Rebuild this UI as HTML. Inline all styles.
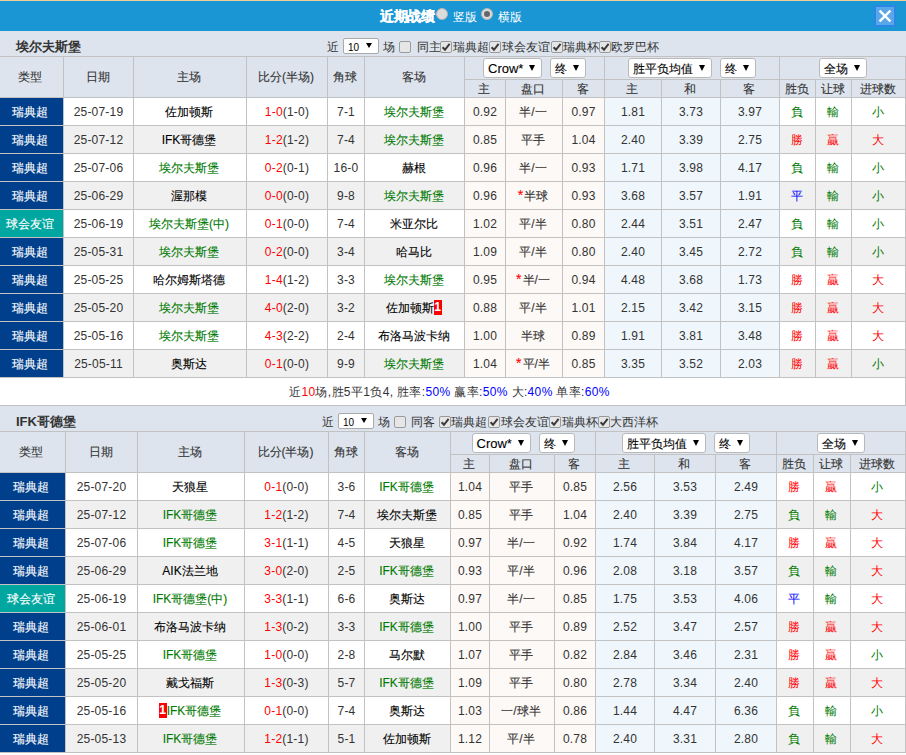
<!DOCTYPE html><html><head><meta charset="utf-8"><style>
html,body{margin:0;padding:0;background:#fff;}
body{width:906px;height:755px;position:relative;overflow:hidden;font-family:"Liberation Sans",sans-serif;font-size:12px;color:#333;}
div{position:absolute;box-sizing:border-box;}
.c,.h,.grp{display:flex;align-items:center;justify-content:center;white-space:nowrap;}
.c{padding-top:1px;}
.h{padding-top:1px;}
.nm{font-weight:bold;font-size:13px;color:#333;line-height:25px;padding-top:3px;}
.sel{display:inline-block;position:relative;height:20px;box-sizing:border-box;border:1px solid #b9b9b9;border-radius:3px;background:#fff;vertical-align:top;}
.st{position:absolute;left:4px;top:1px;line-height:18px;font-size:12px;color:#000;}
.st.lat{font-size:13px;top:1px;}
.tri{position:absolute;right:6px;top:6px;width:0;height:0;border-left:3px solid transparent;border-right:3px solid transparent;border-top:6px solid #000;}
.gap{display:inline-block;width:8px;}
.bdg{display:inline-block;background:#f00;color:#fff;font-weight:bold;width:8px;height:15px;line-height:15px;text-align:center;font-size:12px;position:relative;top:-1px;vertical-align:middle;}
.cb{display:inline-block;width:11px;height:11px;box-sizing:border-box;border:1px solid #9a9a9a;border-radius:2px;background:#e6e6e6;position:relative;vertical-align:middle;}
.star{color:#f00;font-size:14px;margin-right:1px;line-height:12px;}
.in{white-space:pre;position:relative;left:-1px;}
.in.lat0{left:0;letter-spacing:0.2px;}
.in.cjk{-webkit-text-stroke:0.1px currentColor;}
.ns .in.cjk{-webkit-text-stroke:0;}
.c0 .in{left:-2px;}
.grp .in{left:0;}
.ct{line-height:25px;padding-top:4px;white-space:nowrap;color:#333;}
.ct .cb{position:absolute;left:0;top:10px;width:12px;height:12px;}
.sm{position:absolute;left:0;top:7px;width:36px;height:16px;box-sizing:border-box;border:1px solid #aaa;border-radius:2px;background:#fff;}
.smt{position:absolute;left:4px;top:2px;line-height:14px;font-size:10px;color:#000;}
.tri2{position:absolute;left:22px;top:4px;width:0;height:0;border-left:3px solid transparent;border-right:3px solid transparent;border-top:5px solid #000;}
.cb svg{position:absolute;left:0;top:0;}
.tt{color:#fff;font-weight:bold;font-size:14px;line-height:30px;white-space:nowrap;letter-spacing:-0.5px;-webkit-text-stroke:0.3px #fff;}
.tt2{color:#fff;font-size:12px;line-height:32px;white-space:nowrap;}
.rd{border-radius:50%;background:#dcdcdc;border:1px solid #b5b5b5;}
.dot{left:2px;top:2px;width:6px;height:6px;border-radius:50%;background:#666;}
</style></head><body>

<div style="left:0px;top:0px;width:906px;height:1px;background:#f1cf95"></div>
<div style="left:0px;top:1px;width:906px;height:30px;background:#1a96d5"></div>
<div class="tt" style="left:380px;top:1px;width:60px;height:30px;">近期战绩</div>
<div class="rd" style="left:436px;top:8px;width:12px;height:12px;"></div>
<div class="tt2" style="left:453px;top:1px;width:30px;height:30px;">竖版</div>
<div class="rd" style="left:481px;top:8px;width:12px;height:12px;"><div class="dot"></div></div>
<div class="tt2" style="left:498px;top:1px;width:30px;height:30px;">横版</div>
<div style="left:874px;top:5px;width:22px;height:22px;background:#2b88e2"></div>
<div style="left:876px;top:7px;width:18px;height:18px;background:#5aa6ea"><svg width="18" height="18" viewBox="0 0 18 18" style="position:absolute;left:0;top:0"><path d="M3.6 3.6 L14.4 14.4 M14.4 3.6 L3.6 14.4" stroke="#fff" stroke-width="2.4" stroke-linecap="butt"/></svg></div>
<div style="left:0px;top:31px;width:906px;height:25px;background:#dde4ed"></div>
<div class="nm" style="left:16px;top:31px;width:200px;height:25px;">埃尔夫斯堡</div>
<div style="left:0px;top:56px;width:906px;height:41px;background:#dde4ed"></div>
<div class="h c0" style="left:0px;top:57px;width:63px;height:40px;"><span class="in cjk">类型</span></div>
<div class="h" style="left:64px;top:57px;width:69px;height:40px;"><span class="in cjk">日期</span></div>
<div class="h" style="left:134px;top:57px;width:112px;height:40px;"><span class="in cjk">主场</span></div>
<div class="h" style="left:247px;top:57px;width:80px;height:40px;"><span class="in cjk">比分(半场)</span></div>
<div class="h" style="left:328px;top:57px;width:36px;height:40px;"><span class="in cjk">角球</span></div>
<div class="h" style="left:365px;top:57px;width:99px;height:40px;"><span class="in cjk">客场</span></div>
<div class="h" style="left:465px;top:80px;width:40px;height:17px;"><span class="in cjk">主</span></div>
<div class="h" style="left:506px;top:80px;width:56px;height:17px;"><span class="in cjk">盘口</span></div>
<div class="h" style="left:563px;top:80px;width:41px;height:17px;"><span class="in cjk">客</span></div>
<div class="h" style="left:605px;top:80px;width:56px;height:17px;"><span class="in cjk">主</span></div>
<div class="h" style="left:662px;top:80px;width:58px;height:17px;"><span class="in cjk">和</span></div>
<div class="h" style="left:721px;top:80px;width:58px;height:17px;"><span class="in cjk">客</span></div>
<div class="h" style="left:780px;top:80px;width:35px;height:17px;"><span class="in cjk">胜负</span></div>
<div class="h" style="left:816px;top:80px;width:35px;height:17px;"><span class="in cjk">让球</span></div>
<div class="h" style="left:852px;top:80px;width:53px;height:17px;"><span class="in cjk">进球数</span></div>
<div class="grp" style="left:465px;top:57px;width:139px;height:22px;"><span class="in cjk"><span class="sel" style="width:59px"><span class="st lat">Crow*</span><span class="tri"></span></span><span class="gap"></span><span class="sel" style="width:36px"><span class="st">终</span><span class="tri"></span></span></span></div>
<div class="grp" style="left:605px;top:57px;width:174px;height:22px;"><span class="in cjk"><span class="sel" style="width:84px"><span class="st">胜平负均值</span><span class="tri"></span></span><span class="gap"></span><span class="sel" style="width:36px"><span class="st">终</span><span class="tri"></span></span></span></div>
<div class="grp" style="left:780px;top:57px;width:125px;height:22px;"><span class="in cjk"><span class="sel" style="width:48px"><span class="st">全场</span><span class="tri"></span></span></span></div>
<div style="left:0px;top:98px;width:906px;height:27px;background:#fff"></div>
<div class="c c0" style="left:0px;top:98px;width:63px;height:27px;background:#003f8c;color:#fff"><span class="in cjk">瑞典超</span></div>
<div class="c" style="left:64px;top:98px;width:69px;height:27px;"><span class="in lat0">25-07-19</span></div>
<div class="c" style="left:134px;top:98px;width:112px;height:27px;"><span class="in cjk"><span style="color:#000">佐加顿斯</span></span></div>
<div class="c" style="left:247px;top:98px;width:80px;height:27px;"><span class="in lat0"><span style="color:#ff0000">1-0</span>(1-0)</span></div>
<div class="c" style="left:328px;top:98px;width:36px;height:27px;"><span class="in lat0">7-1</span></div>
<div class="c" style="left:365px;top:98px;width:99px;height:27px;"><span class="in cjk"><span style="color:#007a00">埃尔夫斯堡</span></span></div>
<div class="c" style="left:465px;top:98px;width:40px;height:27px;background:#fdf9f6"><span class="in lat0">0.92</span></div>
<div class="c" style="left:506px;top:98px;width:56px;height:27px;background:#fdf9f6"><span class="in cjk">半/一</span></div>
<div class="c" style="left:563px;top:98px;width:41px;height:27px;background:#fdf9f6"><span class="in lat0">0.97</span></div>
<div class="c" style="left:605px;top:98px;width:56px;height:27px;background:#eff7fc"><span class="in lat0">1.81</span></div>
<div class="c" style="left:662px;top:98px;width:58px;height:27px;background:#eff7fc"><span class="in lat0">3.73</span></div>
<div class="c" style="left:721px;top:98px;width:58px;height:27px;background:#eff7fc"><span class="in lat0">3.97</span></div>
<div class="c ns" style="left:780px;top:98px;width:35px;height:27px;color:#007a00"><span class="in cjk">負</span></div>
<div class="c ns" style="left:816px;top:98px;width:35px;height:27px;color:#007a00"><span class="in cjk">輸</span></div>
<div class="c ns" style="left:852px;top:98px;width:53px;height:27px;color:#007a00"><span class="in cjk">小</span></div>
<div style="left:0px;top:126px;width:906px;height:27px;background:#f0f0f0"></div>
<div class="c c0" style="left:0px;top:126px;width:63px;height:27px;background:#003f8c;color:#fff"><span class="in cjk">瑞典超</span></div>
<div class="c" style="left:64px;top:126px;width:69px;height:27px;"><span class="in lat0">25-07-12</span></div>
<div class="c" style="left:134px;top:126px;width:112px;height:27px;"><span class="in cjk"><span style="color:#000">IFK哥德堡</span></span></div>
<div class="c" style="left:247px;top:126px;width:80px;height:27px;"><span class="in lat0"><span style="color:#ff0000">1-2</span>(1-2)</span></div>
<div class="c" style="left:328px;top:126px;width:36px;height:27px;"><span class="in lat0">7-4</span></div>
<div class="c" style="left:365px;top:126px;width:99px;height:27px;"><span class="in cjk"><span style="color:#007a00">埃尔夫斯堡</span></span></div>
<div class="c" style="left:465px;top:126px;width:40px;height:27px;background:#fdf9f6"><span class="in lat0">0.85</span></div>
<div class="c" style="left:506px;top:126px;width:56px;height:27px;background:#fdf9f6"><span class="in cjk">平手</span></div>
<div class="c" style="left:563px;top:126px;width:41px;height:27px;background:#fdf9f6"><span class="in lat0">1.04</span></div>
<div class="c" style="left:605px;top:126px;width:56px;height:27px;background:#eff7fc"><span class="in lat0">2.40</span></div>
<div class="c" style="left:662px;top:126px;width:58px;height:27px;background:#eff7fc"><span class="in lat0">3.39</span></div>
<div class="c" style="left:721px;top:126px;width:58px;height:27px;background:#eff7fc"><span class="in lat0">2.75</span></div>
<div class="c ns" style="left:780px;top:126px;width:35px;height:27px;color:#ff0000"><span class="in cjk">勝</span></div>
<div class="c ns" style="left:816px;top:126px;width:35px;height:27px;color:#ff0000"><span class="in cjk">贏</span></div>
<div class="c ns" style="left:852px;top:126px;width:53px;height:27px;color:#ff0000"><span class="in cjk">大</span></div>
<div style="left:0px;top:154px;width:906px;height:27px;background:#fff"></div>
<div class="c c0" style="left:0px;top:154px;width:63px;height:27px;background:#003f8c;color:#fff"><span class="in cjk">瑞典超</span></div>
<div class="c" style="left:64px;top:154px;width:69px;height:27px;"><span class="in lat0">25-07-06</span></div>
<div class="c" style="left:134px;top:154px;width:112px;height:27px;"><span class="in cjk"><span style="color:#007a00">埃尔夫斯堡</span></span></div>
<div class="c" style="left:247px;top:154px;width:80px;height:27px;"><span class="in lat0"><span style="color:#ff0000">0-2</span>(0-1)</span></div>
<div class="c" style="left:328px;top:154px;width:36px;height:27px;"><span class="in lat0">16-0</span></div>
<div class="c" style="left:365px;top:154px;width:99px;height:27px;"><span class="in cjk"><span style="color:#000">赫根</span></span></div>
<div class="c" style="left:465px;top:154px;width:40px;height:27px;background:#fdf9f6"><span class="in lat0">0.96</span></div>
<div class="c" style="left:506px;top:154px;width:56px;height:27px;background:#fdf9f6"><span class="in cjk">半/一</span></div>
<div class="c" style="left:563px;top:154px;width:41px;height:27px;background:#fdf9f6"><span class="in lat0">0.93</span></div>
<div class="c" style="left:605px;top:154px;width:56px;height:27px;background:#eff7fc"><span class="in lat0">1.71</span></div>
<div class="c" style="left:662px;top:154px;width:58px;height:27px;background:#eff7fc"><span class="in lat0">3.98</span></div>
<div class="c" style="left:721px;top:154px;width:58px;height:27px;background:#eff7fc"><span class="in lat0">4.17</span></div>
<div class="c ns" style="left:780px;top:154px;width:35px;height:27px;color:#007a00"><span class="in cjk">負</span></div>
<div class="c ns" style="left:816px;top:154px;width:35px;height:27px;color:#007a00"><span class="in cjk">輸</span></div>
<div class="c ns" style="left:852px;top:154px;width:53px;height:27px;color:#007a00"><span class="in cjk">小</span></div>
<div style="left:0px;top:182px;width:906px;height:27px;background:#f0f0f0"></div>
<div class="c c0" style="left:0px;top:182px;width:63px;height:27px;background:#003f8c;color:#fff"><span class="in cjk">瑞典超</span></div>
<div class="c" style="left:64px;top:182px;width:69px;height:27px;"><span class="in lat0">25-06-29</span></div>
<div class="c" style="left:134px;top:182px;width:112px;height:27px;"><span class="in cjk"><span style="color:#000">渥那模</span></span></div>
<div class="c" style="left:247px;top:182px;width:80px;height:27px;"><span class="in lat0"><span style="color:#ff0000">0-0</span>(0-0)</span></div>
<div class="c" style="left:328px;top:182px;width:36px;height:27px;"><span class="in lat0">9-8</span></div>
<div class="c" style="left:365px;top:182px;width:99px;height:27px;"><span class="in cjk"><span style="color:#007a00">埃尔夫斯堡</span></span></div>
<div class="c" style="left:465px;top:182px;width:40px;height:27px;background:#fdf9f6"><span class="in lat0">0.96</span></div>
<div class="c" style="left:506px;top:182px;width:56px;height:27px;background:#fdf9f6"><span class="in cjk"><span class="star">*</span>半球</span></div>
<div class="c" style="left:563px;top:182px;width:41px;height:27px;background:#fdf9f6"><span class="in lat0">0.93</span></div>
<div class="c" style="left:605px;top:182px;width:56px;height:27px;background:#eff7fc"><span class="in lat0">3.68</span></div>
<div class="c" style="left:662px;top:182px;width:58px;height:27px;background:#eff7fc"><span class="in lat0">3.57</span></div>
<div class="c" style="left:721px;top:182px;width:58px;height:27px;background:#eff7fc"><span class="in lat0">1.91</span></div>
<div class="c ns" style="left:780px;top:182px;width:35px;height:27px;color:#0000ff"><span class="in cjk">平</span></div>
<div class="c ns" style="left:816px;top:182px;width:35px;height:27px;color:#007a00"><span class="in cjk">輸</span></div>
<div class="c ns" style="left:852px;top:182px;width:53px;height:27px;color:#007a00"><span class="in cjk">小</span></div>
<div style="left:0px;top:210px;width:906px;height:27px;background:#fff"></div>
<div class="c c0" style="left:0px;top:210px;width:63px;height:27px;background:#00a6a0;color:#fff"><span class="in cjk">球会友谊</span></div>
<div class="c" style="left:64px;top:210px;width:69px;height:27px;"><span class="in lat0">25-06-19</span></div>
<div class="c" style="left:134px;top:210px;width:112px;height:27px;"><span class="in cjk"><span style="color:#007a00">埃尔夫斯堡(中)</span></span></div>
<div class="c" style="left:247px;top:210px;width:80px;height:27px;"><span class="in lat0"><span style="color:#ff0000">0-1</span>(0-0)</span></div>
<div class="c" style="left:328px;top:210px;width:36px;height:27px;"><span class="in lat0">7-4</span></div>
<div class="c" style="left:365px;top:210px;width:99px;height:27px;"><span class="in cjk"><span style="color:#000">米亚尔比</span></span></div>
<div class="c" style="left:465px;top:210px;width:40px;height:27px;background:#fdf9f6"><span class="in lat0">1.02</span></div>
<div class="c" style="left:506px;top:210px;width:56px;height:27px;background:#fdf9f6"><span class="in cjk">平/半</span></div>
<div class="c" style="left:563px;top:210px;width:41px;height:27px;background:#fdf9f6"><span class="in lat0">0.80</span></div>
<div class="c" style="left:605px;top:210px;width:56px;height:27px;background:#eff7fc"><span class="in lat0">2.44</span></div>
<div class="c" style="left:662px;top:210px;width:58px;height:27px;background:#eff7fc"><span class="in lat0">3.51</span></div>
<div class="c" style="left:721px;top:210px;width:58px;height:27px;background:#eff7fc"><span class="in lat0">2.47</span></div>
<div class="c ns" style="left:780px;top:210px;width:35px;height:27px;color:#007a00"><span class="in cjk">負</span></div>
<div class="c ns" style="left:816px;top:210px;width:35px;height:27px;color:#007a00"><span class="in cjk">輸</span></div>
<div class="c ns" style="left:852px;top:210px;width:53px;height:27px;color:#007a00"><span class="in cjk">小</span></div>
<div style="left:0px;top:238px;width:906px;height:27px;background:#f0f0f0"></div>
<div class="c c0" style="left:0px;top:238px;width:63px;height:27px;background:#003f8c;color:#fff"><span class="in cjk">瑞典超</span></div>
<div class="c" style="left:64px;top:238px;width:69px;height:27px;"><span class="in lat0">25-05-31</span></div>
<div class="c" style="left:134px;top:238px;width:112px;height:27px;"><span class="in cjk"><span style="color:#007a00">埃尔夫斯堡</span></span></div>
<div class="c" style="left:247px;top:238px;width:80px;height:27px;"><span class="in lat0"><span style="color:#ff0000">0-2</span>(0-0)</span></div>
<div class="c" style="left:328px;top:238px;width:36px;height:27px;"><span class="in lat0">3-4</span></div>
<div class="c" style="left:365px;top:238px;width:99px;height:27px;"><span class="in cjk"><span style="color:#000">哈马比</span></span></div>
<div class="c" style="left:465px;top:238px;width:40px;height:27px;background:#fdf9f6"><span class="in lat0">1.09</span></div>
<div class="c" style="left:506px;top:238px;width:56px;height:27px;background:#fdf9f6"><span class="in cjk">平/半</span></div>
<div class="c" style="left:563px;top:238px;width:41px;height:27px;background:#fdf9f6"><span class="in lat0">0.80</span></div>
<div class="c" style="left:605px;top:238px;width:56px;height:27px;background:#eff7fc"><span class="in lat0">2.40</span></div>
<div class="c" style="left:662px;top:238px;width:58px;height:27px;background:#eff7fc"><span class="in lat0">3.45</span></div>
<div class="c" style="left:721px;top:238px;width:58px;height:27px;background:#eff7fc"><span class="in lat0">2.72</span></div>
<div class="c ns" style="left:780px;top:238px;width:35px;height:27px;color:#007a00"><span class="in cjk">負</span></div>
<div class="c ns" style="left:816px;top:238px;width:35px;height:27px;color:#007a00"><span class="in cjk">輸</span></div>
<div class="c ns" style="left:852px;top:238px;width:53px;height:27px;color:#007a00"><span class="in cjk">小</span></div>
<div style="left:0px;top:266px;width:906px;height:27px;background:#fff"></div>
<div class="c c0" style="left:0px;top:266px;width:63px;height:27px;background:#003f8c;color:#fff"><span class="in cjk">瑞典超</span></div>
<div class="c" style="left:64px;top:266px;width:69px;height:27px;"><span class="in lat0">25-05-25</span></div>
<div class="c" style="left:134px;top:266px;width:112px;height:27px;"><span class="in cjk"><span style="color:#000">哈尔姆斯塔德</span></span></div>
<div class="c" style="left:247px;top:266px;width:80px;height:27px;"><span class="in lat0"><span style="color:#ff0000">1-4</span>(1-2)</span></div>
<div class="c" style="left:328px;top:266px;width:36px;height:27px;"><span class="in lat0">3-3</span></div>
<div class="c" style="left:365px;top:266px;width:99px;height:27px;"><span class="in cjk"><span style="color:#007a00">埃尔夫斯堡</span></span></div>
<div class="c" style="left:465px;top:266px;width:40px;height:27px;background:#fdf9f6"><span class="in lat0">0.95</span></div>
<div class="c" style="left:506px;top:266px;width:56px;height:27px;background:#fdf9f6"><span class="in cjk"><span class="star">*</span>半/一</span></div>
<div class="c" style="left:563px;top:266px;width:41px;height:27px;background:#fdf9f6"><span class="in lat0">0.94</span></div>
<div class="c" style="left:605px;top:266px;width:56px;height:27px;background:#eff7fc"><span class="in lat0">4.48</span></div>
<div class="c" style="left:662px;top:266px;width:58px;height:27px;background:#eff7fc"><span class="in lat0">3.68</span></div>
<div class="c" style="left:721px;top:266px;width:58px;height:27px;background:#eff7fc"><span class="in lat0">1.73</span></div>
<div class="c ns" style="left:780px;top:266px;width:35px;height:27px;color:#ff0000"><span class="in cjk">勝</span></div>
<div class="c ns" style="left:816px;top:266px;width:35px;height:27px;color:#ff0000"><span class="in cjk">贏</span></div>
<div class="c ns" style="left:852px;top:266px;width:53px;height:27px;color:#ff0000"><span class="in cjk">大</span></div>
<div style="left:0px;top:294px;width:906px;height:27px;background:#f0f0f0"></div>
<div class="c c0" style="left:0px;top:294px;width:63px;height:27px;background:#003f8c;color:#fff"><span class="in cjk">瑞典超</span></div>
<div class="c" style="left:64px;top:294px;width:69px;height:27px;"><span class="in lat0">25-05-20</span></div>
<div class="c" style="left:134px;top:294px;width:112px;height:27px;"><span class="in cjk"><span style="color:#007a00">埃尔夫斯堡</span></span></div>
<div class="c" style="left:247px;top:294px;width:80px;height:27px;"><span class="in lat0"><span style="color:#ff0000">4-0</span>(2-0)</span></div>
<div class="c" style="left:328px;top:294px;width:36px;height:27px;"><span class="in lat0">3-2</span></div>
<div class="c" style="left:365px;top:294px;width:99px;height:27px;"><span class="in cjk"><span style="color:#000">佐加顿斯</span><span class="bdg">1</span></span></div>
<div class="c" style="left:465px;top:294px;width:40px;height:27px;background:#fdf9f6"><span class="in lat0">0.88</span></div>
<div class="c" style="left:506px;top:294px;width:56px;height:27px;background:#fdf9f6"><span class="in cjk">平/半</span></div>
<div class="c" style="left:563px;top:294px;width:41px;height:27px;background:#fdf9f6"><span class="in lat0">1.01</span></div>
<div class="c" style="left:605px;top:294px;width:56px;height:27px;background:#eff7fc"><span class="in lat0">2.15</span></div>
<div class="c" style="left:662px;top:294px;width:58px;height:27px;background:#eff7fc"><span class="in lat0">3.42</span></div>
<div class="c" style="left:721px;top:294px;width:58px;height:27px;background:#eff7fc"><span class="in lat0">3.15</span></div>
<div class="c ns" style="left:780px;top:294px;width:35px;height:27px;color:#ff0000"><span class="in cjk">勝</span></div>
<div class="c ns" style="left:816px;top:294px;width:35px;height:27px;color:#ff0000"><span class="in cjk">贏</span></div>
<div class="c ns" style="left:852px;top:294px;width:53px;height:27px;color:#ff0000"><span class="in cjk">大</span></div>
<div style="left:0px;top:322px;width:906px;height:27px;background:#fff"></div>
<div class="c c0" style="left:0px;top:322px;width:63px;height:27px;background:#003f8c;color:#fff"><span class="in cjk">瑞典超</span></div>
<div class="c" style="left:64px;top:322px;width:69px;height:27px;"><span class="in lat0">25-05-16</span></div>
<div class="c" style="left:134px;top:322px;width:112px;height:27px;"><span class="in cjk"><span style="color:#007a00">埃尔夫斯堡</span></span></div>
<div class="c" style="left:247px;top:322px;width:80px;height:27px;"><span class="in lat0"><span style="color:#ff0000">4-3</span>(2-2)</span></div>
<div class="c" style="left:328px;top:322px;width:36px;height:27px;"><span class="in lat0">2-4</span></div>
<div class="c" style="left:365px;top:322px;width:99px;height:27px;"><span class="in cjk"><span style="color:#000">布洛马波卡纳</span></span></div>
<div class="c" style="left:465px;top:322px;width:40px;height:27px;background:#fdf9f6"><span class="in lat0">1.00</span></div>
<div class="c" style="left:506px;top:322px;width:56px;height:27px;background:#fdf9f6"><span class="in cjk">半球</span></div>
<div class="c" style="left:563px;top:322px;width:41px;height:27px;background:#fdf9f6"><span class="in lat0">0.89</span></div>
<div class="c" style="left:605px;top:322px;width:56px;height:27px;background:#eff7fc"><span class="in lat0">1.91</span></div>
<div class="c" style="left:662px;top:322px;width:58px;height:27px;background:#eff7fc"><span class="in lat0">3.81</span></div>
<div class="c" style="left:721px;top:322px;width:58px;height:27px;background:#eff7fc"><span class="in lat0">3.48</span></div>
<div class="c ns" style="left:780px;top:322px;width:35px;height:27px;color:#ff0000"><span class="in cjk">勝</span></div>
<div class="c ns" style="left:816px;top:322px;width:35px;height:27px;color:#ff0000"><span class="in cjk">贏</span></div>
<div class="c ns" style="left:852px;top:322px;width:53px;height:27px;color:#ff0000"><span class="in cjk">大</span></div>
<div style="left:0px;top:350px;width:906px;height:27px;background:#f0f0f0"></div>
<div class="c c0" style="left:0px;top:350px;width:63px;height:27px;background:#003f8c;color:#fff"><span class="in cjk">瑞典超</span></div>
<div class="c" style="left:64px;top:350px;width:69px;height:27px;"><span class="in lat0">25-05-11</span></div>
<div class="c" style="left:134px;top:350px;width:112px;height:27px;"><span class="in cjk"><span style="color:#000">奥斯达</span></span></div>
<div class="c" style="left:247px;top:350px;width:80px;height:27px;"><span class="in lat0"><span style="color:#ff0000">0-1</span>(0-0)</span></div>
<div class="c" style="left:328px;top:350px;width:36px;height:27px;"><span class="in lat0">9-9</span></div>
<div class="c" style="left:365px;top:350px;width:99px;height:27px;"><span class="in cjk"><span style="color:#007a00">埃尔夫斯堡</span></span></div>
<div class="c" style="left:465px;top:350px;width:40px;height:27px;background:#fdf9f6"><span class="in lat0">1.04</span></div>
<div class="c" style="left:506px;top:350px;width:56px;height:27px;background:#fdf9f6"><span class="in cjk"><span class="star">*</span>平/半</span></div>
<div class="c" style="left:563px;top:350px;width:41px;height:27px;background:#fdf9f6"><span class="in lat0">0.85</span></div>
<div class="c" style="left:605px;top:350px;width:56px;height:27px;background:#eff7fc"><span class="in lat0">3.35</span></div>
<div class="c" style="left:662px;top:350px;width:58px;height:27px;background:#eff7fc"><span class="in lat0">3.52</span></div>
<div class="c" style="left:721px;top:350px;width:58px;height:27px;background:#eff7fc"><span class="in lat0">2.03</span></div>
<div class="c ns" style="left:780px;top:350px;width:35px;height:27px;color:#ff0000"><span class="in cjk">勝</span></div>
<div class="c ns" style="left:816px;top:350px;width:35px;height:27px;color:#ff0000"><span class="in cjk">贏</span></div>
<div class="c ns" style="left:852px;top:350px;width:53px;height:27px;color:#007a00"><span class="in cjk">小</span></div>
<div style="left:0px;top:56px;width:906px;height:1px;background:#c2c2c2"></div>
<div style="left:464px;top:79px;width:442px;height:1px;background:#c2c2c2"></div>
<div style="left:0px;top:97px;width:906px;height:1px;background:#c2c2c2"></div>
<div style="left:0px;top:125px;width:906px;height:1px;background:#c2c2c2"></div>
<div style="left:0px;top:153px;width:906px;height:1px;background:#c2c2c2"></div>
<div style="left:0px;top:181px;width:906px;height:1px;background:#c2c2c2"></div>
<div style="left:0px;top:209px;width:906px;height:1px;background:#c2c2c2"></div>
<div style="left:0px;top:237px;width:906px;height:1px;background:#c2c2c2"></div>
<div style="left:0px;top:265px;width:906px;height:1px;background:#c2c2c2"></div>
<div style="left:0px;top:293px;width:906px;height:1px;background:#c2c2c2"></div>
<div style="left:0px;top:321px;width:906px;height:1px;background:#c2c2c2"></div>
<div style="left:0px;top:349px;width:906px;height:1px;background:#c2c2c2"></div>
<div style="left:0px;top:377px;width:906px;height:1px;background:#c2c2c2"></div>
<div style="left:63px;top:56px;width:1px;height:322px;background:#c2c2c2"></div>
<div style="left:133px;top:56px;width:1px;height:322px;background:#c2c2c2"></div>
<div style="left:246px;top:56px;width:1px;height:322px;background:#c2c2c2"></div>
<div style="left:327px;top:56px;width:1px;height:322px;background:#c2c2c2"></div>
<div style="left:364px;top:56px;width:1px;height:322px;background:#c2c2c2"></div>
<div style="left:464px;top:56px;width:1px;height:322px;background:#c2c2c2"></div>
<div style="left:505px;top:79px;width:1px;height:299px;background:#c2c2c2"></div>
<div style="left:562px;top:79px;width:1px;height:299px;background:#c2c2c2"></div>
<div style="left:604px;top:56px;width:1px;height:322px;background:#c2c2c2"></div>
<div style="left:661px;top:79px;width:1px;height:299px;background:#c2c2c2"></div>
<div style="left:720px;top:79px;width:1px;height:299px;background:#c2c2c2"></div>
<div style="left:779px;top:56px;width:1px;height:322px;background:#c2c2c2"></div>
<div style="left:815px;top:79px;width:1px;height:299px;background:#c2c2c2"></div>
<div style="left:851px;top:79px;width:1px;height:299px;background:#c2c2c2"></div>
<div style="left:905px;top:56px;width:1px;height:322px;background:#c2c2c2"></div>
<div class="ct" style="left:327px;top:31px;width:12px;height:25px;">近</div>
<div class="ct" style="left:343px;top:31px;width:36px;height:25px;"><span class="sm"><span class="smt">10</span><span class="tri2"></span></span></div>
<div class="ct" style="left:383px;top:31px;width:12px;height:25px;">场</div>
<div class="ct" style="left:399px;top:31px;width:12px;height:25px;"><span class="cb"></span></div>
<div class="ct" style="left:417px;top:31px;width:24px;height:25px;">同主</div>
<div class="ct" style="left:440px;top:31px;width:12px;height:25px;"><span class="cb on"><svg width="10" height="10" viewBox="0 0 10 10"><path d="M1.6 5.2 L4 7.8 L8.6 1.8" fill="none" stroke="#3a3a3a" stroke-width="2"/></svg></span></div>
<div class="ct" style="left:453px;top:31px;width:36px;height:25px;">瑞典超</div>
<div class="ct" style="left:489px;top:31px;width:12px;height:25px;"><span class="cb on"><svg width="10" height="10" viewBox="0 0 10 10"><path d="M1.6 5.2 L4 7.8 L8.6 1.8" fill="none" stroke="#3a3a3a" stroke-width="2"/></svg></span></div>
<div class="ct" style="left:502px;top:31px;width:48px;height:25px;">球会友谊</div>
<div class="ct" style="left:551px;top:31px;width:12px;height:25px;"><span class="cb on"><svg width="10" height="10" viewBox="0 0 10 10"><path d="M1.6 5.2 L4 7.8 L8.6 1.8" fill="none" stroke="#3a3a3a" stroke-width="2"/></svg></span></div>
<div class="ct" style="left:563px;top:31px;width:36px;height:25px;">瑞典杯</div>
<div class="ct" style="left:599px;top:31px;width:12px;height:25px;"><span class="cb on"><svg width="10" height="10" viewBox="0 0 10 10"><path d="M1.6 5.2 L4 7.8 L8.6 1.8" fill="none" stroke="#3a3a3a" stroke-width="2"/></svg></span></div>
<div class="ct" style="left:611px;top:31px;width:48px;height:25px;">欧罗巴杯</div>
<div class="c" style="left:289px;top:378px;width:400px;height:27px;letter-spacing:0.36px;justify-content:flex-start"><span class="in" style="left:0">近<span style="color:#f00">10</span>场,胜5平1负4, 胜率:<span style="color:#00f">50%</span> 赢率:<span style="color:#00f">50%</span> 大:<span style="color:#00f">40%</span> 单率:<span style="color:#00f">60%</span></span></div>
<div style="left:905px;top:378px;width:1px;height:27px;background:#c2c2c2"></div>
<div style="left:0px;top:405px;width:906px;height:1px;background:#c2c2c2"></div>
<div style="left:0px;top:406px;width:906px;height:25px;background:#dde4ed"></div>
<div class="nm" style="left:16px;top:406px;width:200px;height:25px;">IFK哥德堡</div>
<div style="left:0px;top:431px;width:906px;height:41px;background:#dde4ed"></div>
<div class="h c0" style="left:0px;top:432px;width:65px;height:40px;"><span class="in cjk">类型</span></div>
<div class="h" style="left:66px;top:432px;width:71px;height:40px;"><span class="in cjk">日期</span></div>
<div class="h" style="left:138px;top:432px;width:106px;height:40px;"><span class="in cjk">主场</span></div>
<div class="h" style="left:245px;top:432px;width:83px;height:40px;"><span class="in cjk">比分(半场)</span></div>
<div class="h" style="left:329px;top:432px;width:35px;height:40px;"><span class="in cjk">角球</span></div>
<div class="h" style="left:365px;top:432px;width:85px;height:40px;"><span class="in cjk">客场</span></div>
<div class="h" style="left:451px;top:455px;width:38px;height:17px;"><span class="in cjk">主</span></div>
<div class="h" style="left:490px;top:455px;width:64px;height:17px;"><span class="in cjk">盘口</span></div>
<div class="h" style="left:555px;top:455px;width:40px;height:17px;"><span class="in cjk">客</span></div>
<div class="h" style="left:596px;top:455px;width:58px;height:17px;"><span class="in cjk">主</span></div>
<div class="h" style="left:655px;top:455px;width:60px;height:17px;"><span class="in cjk">和</span></div>
<div class="h" style="left:716px;top:455px;width:60px;height:17px;"><span class="in cjk">客</span></div>
<div class="h" style="left:777px;top:455px;width:36px;height:17px;"><span class="in cjk">胜负</span></div>
<div class="h" style="left:814px;top:455px;width:36px;height:17px;"><span class="in cjk">让球</span></div>
<div class="h" style="left:851px;top:455px;width:54px;height:17px;"><span class="in cjk">进球数</span></div>
<div class="grp" style="left:451px;top:432px;width:144px;height:22px;"><span class="in cjk"><span class="sel" style="width:59px"><span class="st lat">Crow*</span><span class="tri"></span></span><span class="gap"></span><span class="sel" style="width:36px"><span class="st">终</span><span class="tri"></span></span></span></div>
<div class="grp" style="left:596px;top:432px;width:180px;height:22px;"><span class="in cjk"><span class="sel" style="width:84px"><span class="st">胜平负均值</span><span class="tri"></span></span><span class="gap"></span><span class="sel" style="width:36px"><span class="st">终</span><span class="tri"></span></span></span></div>
<div class="grp" style="left:777px;top:432px;width:128px;height:22px;"><span class="in cjk"><span class="sel" style="width:48px"><span class="st">全场</span><span class="tri"></span></span></span></div>
<div style="left:0px;top:473px;width:906px;height:27px;background:#fff"></div>
<div class="c c0" style="left:0px;top:473px;width:65px;height:27px;background:#003f8c;color:#fff"><span class="in cjk">瑞典超</span></div>
<div class="c" style="left:66px;top:473px;width:71px;height:27px;"><span class="in lat0">25-07-20</span></div>
<div class="c" style="left:138px;top:473px;width:106px;height:27px;"><span class="in cjk"><span style="color:#000">天狼星</span></span></div>
<div class="c" style="left:245px;top:473px;width:83px;height:27px;"><span class="in lat0"><span style="color:#ff0000">0-1</span>(0-0)</span></div>
<div class="c" style="left:329px;top:473px;width:35px;height:27px;"><span class="in lat0">3-6</span></div>
<div class="c" style="left:365px;top:473px;width:85px;height:27px;"><span class="in cjk"><span style="color:#007a00">IFK哥德堡</span></span></div>
<div class="c" style="left:451px;top:473px;width:38px;height:27px;background:#fdf9f6"><span class="in lat0">1.04</span></div>
<div class="c" style="left:490px;top:473px;width:64px;height:27px;background:#fdf9f6"><span class="in cjk">平手</span></div>
<div class="c" style="left:555px;top:473px;width:40px;height:27px;background:#fdf9f6"><span class="in lat0">0.85</span></div>
<div class="c" style="left:596px;top:473px;width:58px;height:27px;background:#eff7fc"><span class="in lat0">2.56</span></div>
<div class="c" style="left:655px;top:473px;width:60px;height:27px;background:#eff7fc"><span class="in lat0">3.53</span></div>
<div class="c" style="left:716px;top:473px;width:60px;height:27px;background:#eff7fc"><span class="in lat0">2.49</span></div>
<div class="c ns" style="left:777px;top:473px;width:36px;height:27px;color:#ff0000"><span class="in cjk">勝</span></div>
<div class="c ns" style="left:814px;top:473px;width:36px;height:27px;color:#ff0000"><span class="in cjk">贏</span></div>
<div class="c ns" style="left:851px;top:473px;width:54px;height:27px;color:#007a00"><span class="in cjk">小</span></div>
<div style="left:0px;top:501px;width:906px;height:27px;background:#f0f0f0"></div>
<div class="c c0" style="left:0px;top:501px;width:65px;height:27px;background:#003f8c;color:#fff"><span class="in cjk">瑞典超</span></div>
<div class="c" style="left:66px;top:501px;width:71px;height:27px;"><span class="in lat0">25-07-12</span></div>
<div class="c" style="left:138px;top:501px;width:106px;height:27px;"><span class="in cjk"><span style="color:#007a00">IFK哥德堡</span></span></div>
<div class="c" style="left:245px;top:501px;width:83px;height:27px;"><span class="in lat0"><span style="color:#ff0000">1-2</span>(1-2)</span></div>
<div class="c" style="left:329px;top:501px;width:35px;height:27px;"><span class="in lat0">7-4</span></div>
<div class="c" style="left:365px;top:501px;width:85px;height:27px;"><span class="in cjk"><span style="color:#000">埃尔夫斯堡</span></span></div>
<div class="c" style="left:451px;top:501px;width:38px;height:27px;background:#fdf9f6"><span class="in lat0">0.85</span></div>
<div class="c" style="left:490px;top:501px;width:64px;height:27px;background:#fdf9f6"><span class="in cjk">平手</span></div>
<div class="c" style="left:555px;top:501px;width:40px;height:27px;background:#fdf9f6"><span class="in lat0">1.04</span></div>
<div class="c" style="left:596px;top:501px;width:58px;height:27px;background:#eff7fc"><span class="in lat0">2.40</span></div>
<div class="c" style="left:655px;top:501px;width:60px;height:27px;background:#eff7fc"><span class="in lat0">3.39</span></div>
<div class="c" style="left:716px;top:501px;width:60px;height:27px;background:#eff7fc"><span class="in lat0">2.75</span></div>
<div class="c ns" style="left:777px;top:501px;width:36px;height:27px;color:#007a00"><span class="in cjk">負</span></div>
<div class="c ns" style="left:814px;top:501px;width:36px;height:27px;color:#007a00"><span class="in cjk">輸</span></div>
<div class="c ns" style="left:851px;top:501px;width:54px;height:27px;color:#ff0000"><span class="in cjk">大</span></div>
<div style="left:0px;top:529px;width:906px;height:27px;background:#fff"></div>
<div class="c c0" style="left:0px;top:529px;width:65px;height:27px;background:#003f8c;color:#fff"><span class="in cjk">瑞典超</span></div>
<div class="c" style="left:66px;top:529px;width:71px;height:27px;"><span class="in lat0">25-07-06</span></div>
<div class="c" style="left:138px;top:529px;width:106px;height:27px;"><span class="in cjk"><span style="color:#007a00">IFK哥德堡</span></span></div>
<div class="c" style="left:245px;top:529px;width:83px;height:27px;"><span class="in lat0"><span style="color:#ff0000">3-1</span>(1-1)</span></div>
<div class="c" style="left:329px;top:529px;width:35px;height:27px;"><span class="in lat0">4-5</span></div>
<div class="c" style="left:365px;top:529px;width:85px;height:27px;"><span class="in cjk"><span style="color:#000">天狼星</span></span></div>
<div class="c" style="left:451px;top:529px;width:38px;height:27px;background:#fdf9f6"><span class="in lat0">0.97</span></div>
<div class="c" style="left:490px;top:529px;width:64px;height:27px;background:#fdf9f6"><span class="in cjk">半/一</span></div>
<div class="c" style="left:555px;top:529px;width:40px;height:27px;background:#fdf9f6"><span class="in lat0">0.92</span></div>
<div class="c" style="left:596px;top:529px;width:58px;height:27px;background:#eff7fc"><span class="in lat0">1.74</span></div>
<div class="c" style="left:655px;top:529px;width:60px;height:27px;background:#eff7fc"><span class="in lat0">3.84</span></div>
<div class="c" style="left:716px;top:529px;width:60px;height:27px;background:#eff7fc"><span class="in lat0">4.17</span></div>
<div class="c ns" style="left:777px;top:529px;width:36px;height:27px;color:#ff0000"><span class="in cjk">勝</span></div>
<div class="c ns" style="left:814px;top:529px;width:36px;height:27px;color:#ff0000"><span class="in cjk">贏</span></div>
<div class="c ns" style="left:851px;top:529px;width:54px;height:27px;color:#ff0000"><span class="in cjk">大</span></div>
<div style="left:0px;top:557px;width:906px;height:27px;background:#f0f0f0"></div>
<div class="c c0" style="left:0px;top:557px;width:65px;height:27px;background:#003f8c;color:#fff"><span class="in cjk">瑞典超</span></div>
<div class="c" style="left:66px;top:557px;width:71px;height:27px;"><span class="in lat0">25-06-29</span></div>
<div class="c" style="left:138px;top:557px;width:106px;height:27px;"><span class="in cjk"><span style="color:#000">AIK法兰地</span></span></div>
<div class="c" style="left:245px;top:557px;width:83px;height:27px;"><span class="in lat0"><span style="color:#ff0000">3-0</span>(2-0)</span></div>
<div class="c" style="left:329px;top:557px;width:35px;height:27px;"><span class="in lat0">2-5</span></div>
<div class="c" style="left:365px;top:557px;width:85px;height:27px;"><span class="in cjk"><span style="color:#007a00">IFK哥德堡</span></span></div>
<div class="c" style="left:451px;top:557px;width:38px;height:27px;background:#fdf9f6"><span class="in lat0">0.93</span></div>
<div class="c" style="left:490px;top:557px;width:64px;height:27px;background:#fdf9f6"><span class="in cjk">平/半</span></div>
<div class="c" style="left:555px;top:557px;width:40px;height:27px;background:#fdf9f6"><span class="in lat0">0.96</span></div>
<div class="c" style="left:596px;top:557px;width:58px;height:27px;background:#eff7fc"><span class="in lat0">2.08</span></div>
<div class="c" style="left:655px;top:557px;width:60px;height:27px;background:#eff7fc"><span class="in lat0">3.18</span></div>
<div class="c" style="left:716px;top:557px;width:60px;height:27px;background:#eff7fc"><span class="in lat0">3.57</span></div>
<div class="c ns" style="left:777px;top:557px;width:36px;height:27px;color:#007a00"><span class="in cjk">負</span></div>
<div class="c ns" style="left:814px;top:557px;width:36px;height:27px;color:#007a00"><span class="in cjk">輸</span></div>
<div class="c ns" style="left:851px;top:557px;width:54px;height:27px;color:#ff0000"><span class="in cjk">大</span></div>
<div style="left:0px;top:585px;width:906px;height:27px;background:#fff"></div>
<div class="c c0" style="left:0px;top:585px;width:65px;height:27px;background:#00a6a0;color:#fff"><span class="in cjk">球会友谊</span></div>
<div class="c" style="left:66px;top:585px;width:71px;height:27px;"><span class="in lat0">25-06-19</span></div>
<div class="c" style="left:138px;top:585px;width:106px;height:27px;"><span class="in cjk"><span style="color:#007a00">IFK哥德堡(中)</span></span></div>
<div class="c" style="left:245px;top:585px;width:83px;height:27px;"><span class="in lat0"><span style="color:#ff0000">3-3</span>(1-1)</span></div>
<div class="c" style="left:329px;top:585px;width:35px;height:27px;"><span class="in lat0">6-6</span></div>
<div class="c" style="left:365px;top:585px;width:85px;height:27px;"><span class="in cjk"><span style="color:#000">奥斯达</span></span></div>
<div class="c" style="left:451px;top:585px;width:38px;height:27px;background:#fdf9f6"><span class="in lat0">0.97</span></div>
<div class="c" style="left:490px;top:585px;width:64px;height:27px;background:#fdf9f6"><span class="in cjk">半/一</span></div>
<div class="c" style="left:555px;top:585px;width:40px;height:27px;background:#fdf9f6"><span class="in lat0">0.85</span></div>
<div class="c" style="left:596px;top:585px;width:58px;height:27px;background:#eff7fc"><span class="in lat0">1.75</span></div>
<div class="c" style="left:655px;top:585px;width:60px;height:27px;background:#eff7fc"><span class="in lat0">3.53</span></div>
<div class="c" style="left:716px;top:585px;width:60px;height:27px;background:#eff7fc"><span class="in lat0">4.06</span></div>
<div class="c ns" style="left:777px;top:585px;width:36px;height:27px;color:#0000ff"><span class="in cjk">平</span></div>
<div class="c ns" style="left:814px;top:585px;width:36px;height:27px;color:#007a00"><span class="in cjk">輸</span></div>
<div class="c ns" style="left:851px;top:585px;width:54px;height:27px;color:#ff0000"><span class="in cjk">大</span></div>
<div style="left:0px;top:613px;width:906px;height:27px;background:#f0f0f0"></div>
<div class="c c0" style="left:0px;top:613px;width:65px;height:27px;background:#003f8c;color:#fff"><span class="in cjk">瑞典超</span></div>
<div class="c" style="left:66px;top:613px;width:71px;height:27px;"><span class="in lat0">25-06-01</span></div>
<div class="c" style="left:138px;top:613px;width:106px;height:27px;"><span class="in cjk"><span style="color:#000">布洛马波卡纳</span></span></div>
<div class="c" style="left:245px;top:613px;width:83px;height:27px;"><span class="in lat0"><span style="color:#ff0000">1-3</span>(0-2)</span></div>
<div class="c" style="left:329px;top:613px;width:35px;height:27px;"><span class="in lat0">3-3</span></div>
<div class="c" style="left:365px;top:613px;width:85px;height:27px;"><span class="in cjk"><span style="color:#007a00">IFK哥德堡</span></span></div>
<div class="c" style="left:451px;top:613px;width:38px;height:27px;background:#fdf9f6"><span class="in lat0">1.00</span></div>
<div class="c" style="left:490px;top:613px;width:64px;height:27px;background:#fdf9f6"><span class="in cjk">平手</span></div>
<div class="c" style="left:555px;top:613px;width:40px;height:27px;background:#fdf9f6"><span class="in lat0">0.89</span></div>
<div class="c" style="left:596px;top:613px;width:58px;height:27px;background:#eff7fc"><span class="in lat0">2.52</span></div>
<div class="c" style="left:655px;top:613px;width:60px;height:27px;background:#eff7fc"><span class="in lat0">3.47</span></div>
<div class="c" style="left:716px;top:613px;width:60px;height:27px;background:#eff7fc"><span class="in lat0">2.57</span></div>
<div class="c ns" style="left:777px;top:613px;width:36px;height:27px;color:#ff0000"><span class="in cjk">勝</span></div>
<div class="c ns" style="left:814px;top:613px;width:36px;height:27px;color:#ff0000"><span class="in cjk">贏</span></div>
<div class="c ns" style="left:851px;top:613px;width:54px;height:27px;color:#ff0000"><span class="in cjk">大</span></div>
<div style="left:0px;top:641px;width:906px;height:27px;background:#fff"></div>
<div class="c c0" style="left:0px;top:641px;width:65px;height:27px;background:#003f8c;color:#fff"><span class="in cjk">瑞典超</span></div>
<div class="c" style="left:66px;top:641px;width:71px;height:27px;"><span class="in lat0">25-05-25</span></div>
<div class="c" style="left:138px;top:641px;width:106px;height:27px;"><span class="in cjk"><span style="color:#007a00">IFK哥德堡</span></span></div>
<div class="c" style="left:245px;top:641px;width:83px;height:27px;"><span class="in lat0"><span style="color:#ff0000">1-0</span>(0-0)</span></div>
<div class="c" style="left:329px;top:641px;width:35px;height:27px;"><span class="in lat0">2-8</span></div>
<div class="c" style="left:365px;top:641px;width:85px;height:27px;"><span class="in cjk"><span style="color:#000">马尔默</span></span></div>
<div class="c" style="left:451px;top:641px;width:38px;height:27px;background:#fdf9f6"><span class="in lat0">1.07</span></div>
<div class="c" style="left:490px;top:641px;width:64px;height:27px;background:#fdf9f6"><span class="in cjk">平手</span></div>
<div class="c" style="left:555px;top:641px;width:40px;height:27px;background:#fdf9f6"><span class="in lat0">0.82</span></div>
<div class="c" style="left:596px;top:641px;width:58px;height:27px;background:#eff7fc"><span class="in lat0">2.84</span></div>
<div class="c" style="left:655px;top:641px;width:60px;height:27px;background:#eff7fc"><span class="in lat0">3.46</span></div>
<div class="c" style="left:716px;top:641px;width:60px;height:27px;background:#eff7fc"><span class="in lat0">2.31</span></div>
<div class="c ns" style="left:777px;top:641px;width:36px;height:27px;color:#ff0000"><span class="in cjk">勝</span></div>
<div class="c ns" style="left:814px;top:641px;width:36px;height:27px;color:#ff0000"><span class="in cjk">贏</span></div>
<div class="c ns" style="left:851px;top:641px;width:54px;height:27px;color:#007a00"><span class="in cjk">小</span></div>
<div style="left:0px;top:669px;width:906px;height:27px;background:#f0f0f0"></div>
<div class="c c0" style="left:0px;top:669px;width:65px;height:27px;background:#003f8c;color:#fff"><span class="in cjk">瑞典超</span></div>
<div class="c" style="left:66px;top:669px;width:71px;height:27px;"><span class="in lat0">25-05-20</span></div>
<div class="c" style="left:138px;top:669px;width:106px;height:27px;"><span class="in cjk"><span style="color:#000">戴戈福斯</span></span></div>
<div class="c" style="left:245px;top:669px;width:83px;height:27px;"><span class="in lat0"><span style="color:#ff0000">1-3</span>(0-3)</span></div>
<div class="c" style="left:329px;top:669px;width:35px;height:27px;"><span class="in lat0">5-7</span></div>
<div class="c" style="left:365px;top:669px;width:85px;height:27px;"><span class="in cjk"><span style="color:#007a00">IFK哥德堡</span></span></div>
<div class="c" style="left:451px;top:669px;width:38px;height:27px;background:#fdf9f6"><span class="in lat0">1.09</span></div>
<div class="c" style="left:490px;top:669px;width:64px;height:27px;background:#fdf9f6"><span class="in cjk">平手</span></div>
<div class="c" style="left:555px;top:669px;width:40px;height:27px;background:#fdf9f6"><span class="in lat0">0.80</span></div>
<div class="c" style="left:596px;top:669px;width:58px;height:27px;background:#eff7fc"><span class="in lat0">2.78</span></div>
<div class="c" style="left:655px;top:669px;width:60px;height:27px;background:#eff7fc"><span class="in lat0">3.34</span></div>
<div class="c" style="left:716px;top:669px;width:60px;height:27px;background:#eff7fc"><span class="in lat0">2.40</span></div>
<div class="c ns" style="left:777px;top:669px;width:36px;height:27px;color:#ff0000"><span class="in cjk">勝</span></div>
<div class="c ns" style="left:814px;top:669px;width:36px;height:27px;color:#ff0000"><span class="in cjk">贏</span></div>
<div class="c ns" style="left:851px;top:669px;width:54px;height:27px;color:#ff0000"><span class="in cjk">大</span></div>
<div style="left:0px;top:697px;width:906px;height:27px;background:#fff"></div>
<div class="c c0" style="left:0px;top:697px;width:65px;height:27px;background:#003f8c;color:#fff"><span class="in cjk">瑞典超</span></div>
<div class="c" style="left:66px;top:697px;width:71px;height:27px;"><span class="in lat0">25-05-16</span></div>
<div class="c" style="left:138px;top:697px;width:106px;height:27px;"><span class="in cjk"><span class="bdg">1</span><span style="color:#007a00">IFK哥德堡</span></span></div>
<div class="c" style="left:245px;top:697px;width:83px;height:27px;"><span class="in lat0"><span style="color:#ff0000">0-1</span>(0-0)</span></div>
<div class="c" style="left:329px;top:697px;width:35px;height:27px;"><span class="in lat0">7-4</span></div>
<div class="c" style="left:365px;top:697px;width:85px;height:27px;"><span class="in cjk"><span style="color:#000">奥斯达</span></span></div>
<div class="c" style="left:451px;top:697px;width:38px;height:27px;background:#fdf9f6"><span class="in lat0">1.03</span></div>
<div class="c" style="left:490px;top:697px;width:64px;height:27px;background:#fdf9f6"><span class="in cjk">一/球半</span></div>
<div class="c" style="left:555px;top:697px;width:40px;height:27px;background:#fdf9f6"><span class="in lat0">0.86</span></div>
<div class="c" style="left:596px;top:697px;width:58px;height:27px;background:#eff7fc"><span class="in lat0">1.44</span></div>
<div class="c" style="left:655px;top:697px;width:60px;height:27px;background:#eff7fc"><span class="in lat0">4.47</span></div>
<div class="c" style="left:716px;top:697px;width:60px;height:27px;background:#eff7fc"><span class="in lat0">6.36</span></div>
<div class="c ns" style="left:777px;top:697px;width:36px;height:27px;color:#007a00"><span class="in cjk">負</span></div>
<div class="c ns" style="left:814px;top:697px;width:36px;height:27px;color:#007a00"><span class="in cjk">輸</span></div>
<div class="c ns" style="left:851px;top:697px;width:54px;height:27px;color:#007a00"><span class="in cjk">小</span></div>
<div style="left:0px;top:725px;width:906px;height:27px;background:#f0f0f0"></div>
<div class="c c0" style="left:0px;top:725px;width:65px;height:27px;background:#003f8c;color:#fff"><span class="in cjk">瑞典超</span></div>
<div class="c" style="left:66px;top:725px;width:71px;height:27px;"><span class="in lat0">25-05-13</span></div>
<div class="c" style="left:138px;top:725px;width:106px;height:27px;"><span class="in cjk"><span style="color:#007a00">IFK哥德堡</span></span></div>
<div class="c" style="left:245px;top:725px;width:83px;height:27px;"><span class="in lat0"><span style="color:#ff0000">1-2</span>(1-1)</span></div>
<div class="c" style="left:329px;top:725px;width:35px;height:27px;"><span class="in lat0">5-1</span></div>
<div class="c" style="left:365px;top:725px;width:85px;height:27px;"><span class="in cjk"><span style="color:#000">佐加顿斯</span></span></div>
<div class="c" style="left:451px;top:725px;width:38px;height:27px;background:#fdf9f6"><span class="in lat0">1.12</span></div>
<div class="c" style="left:490px;top:725px;width:64px;height:27px;background:#fdf9f6"><span class="in cjk">平/半</span></div>
<div class="c" style="left:555px;top:725px;width:40px;height:27px;background:#fdf9f6"><span class="in lat0">0.78</span></div>
<div class="c" style="left:596px;top:725px;width:58px;height:27px;background:#eff7fc"><span class="in lat0">2.40</span></div>
<div class="c" style="left:655px;top:725px;width:60px;height:27px;background:#eff7fc"><span class="in lat0">3.31</span></div>
<div class="c" style="left:716px;top:725px;width:60px;height:27px;background:#eff7fc"><span class="in lat0">2.80</span></div>
<div class="c ns" style="left:777px;top:725px;width:36px;height:27px;color:#007a00"><span class="in cjk">負</span></div>
<div class="c ns" style="left:814px;top:725px;width:36px;height:27px;color:#007a00"><span class="in cjk">輸</span></div>
<div class="c ns" style="left:851px;top:725px;width:54px;height:27px;color:#ff0000"><span class="in cjk">大</span></div>
<div style="left:0px;top:431px;width:906px;height:1px;background:#c2c2c2"></div>
<div style="left:450px;top:454px;width:456px;height:1px;background:#c2c2c2"></div>
<div style="left:0px;top:472px;width:906px;height:1px;background:#c2c2c2"></div>
<div style="left:0px;top:500px;width:906px;height:1px;background:#c2c2c2"></div>
<div style="left:0px;top:528px;width:906px;height:1px;background:#c2c2c2"></div>
<div style="left:0px;top:556px;width:906px;height:1px;background:#c2c2c2"></div>
<div style="left:0px;top:584px;width:906px;height:1px;background:#c2c2c2"></div>
<div style="left:0px;top:612px;width:906px;height:1px;background:#c2c2c2"></div>
<div style="left:0px;top:640px;width:906px;height:1px;background:#c2c2c2"></div>
<div style="left:0px;top:668px;width:906px;height:1px;background:#c2c2c2"></div>
<div style="left:0px;top:696px;width:906px;height:1px;background:#c2c2c2"></div>
<div style="left:0px;top:724px;width:906px;height:1px;background:#c2c2c2"></div>
<div style="left:0px;top:752px;width:906px;height:1px;background:#c2c2c2"></div>
<div style="left:65px;top:431px;width:1px;height:322px;background:#c2c2c2"></div>
<div style="left:137px;top:431px;width:1px;height:322px;background:#c2c2c2"></div>
<div style="left:244px;top:431px;width:1px;height:322px;background:#c2c2c2"></div>
<div style="left:328px;top:431px;width:1px;height:322px;background:#c2c2c2"></div>
<div style="left:364px;top:431px;width:1px;height:322px;background:#c2c2c2"></div>
<div style="left:450px;top:431px;width:1px;height:322px;background:#c2c2c2"></div>
<div style="left:489px;top:454px;width:1px;height:299px;background:#c2c2c2"></div>
<div style="left:554px;top:454px;width:1px;height:299px;background:#c2c2c2"></div>
<div style="left:595px;top:431px;width:1px;height:322px;background:#c2c2c2"></div>
<div style="left:654px;top:454px;width:1px;height:299px;background:#c2c2c2"></div>
<div style="left:715px;top:454px;width:1px;height:299px;background:#c2c2c2"></div>
<div style="left:776px;top:431px;width:1px;height:322px;background:#c2c2c2"></div>
<div style="left:813px;top:454px;width:1px;height:299px;background:#c2c2c2"></div>
<div style="left:850px;top:454px;width:1px;height:299px;background:#c2c2c2"></div>
<div style="left:905px;top:431px;width:1px;height:322px;background:#c2c2c2"></div>
<div class="ct" style="left:322px;top:406px;width:12px;height:25px;">近</div>
<div class="ct" style="left:338px;top:406px;width:36px;height:25px;"><span class="sm"><span class="smt">10</span><span class="tri2"></span></span></div>
<div class="ct" style="left:378px;top:406px;width:12px;height:25px;">场</div>
<div class="ct" style="left:394px;top:406px;width:12px;height:25px;"><span class="cb"></span></div>
<div class="ct" style="left:411px;top:406px;width:24px;height:25px;">同客</div>
<div class="ct" style="left:439px;top:406px;width:12px;height:25px;"><span class="cb on"><svg width="10" height="10" viewBox="0 0 10 10"><path d="M1.6 5.2 L4 7.8 L8.6 1.8" fill="none" stroke="#3a3a3a" stroke-width="2"/></svg></span></div>
<div class="ct" style="left:451px;top:406px;width:36px;height:25px;">瑞典超</div>
<div class="ct" style="left:488px;top:406px;width:12px;height:25px;"><span class="cb on"><svg width="10" height="10" viewBox="0 0 10 10"><path d="M1.6 5.2 L4 7.8 L8.6 1.8" fill="none" stroke="#3a3a3a" stroke-width="2"/></svg></span></div>
<div class="ct" style="left:501px;top:406px;width:48px;height:25px;">球会友谊</div>
<div class="ct" style="left:549px;top:406px;width:12px;height:25px;"><span class="cb on"><svg width="10" height="10" viewBox="0 0 10 10"><path d="M1.6 5.2 L4 7.8 L8.6 1.8" fill="none" stroke="#3a3a3a" stroke-width="2"/></svg></span></div>
<div class="ct" style="left:562px;top:406px;width:36px;height:25px;">瑞典杯</div>
<div class="ct" style="left:598px;top:406px;width:12px;height:25px;"><span class="cb on"><svg width="10" height="10" viewBox="0 0 10 10"><path d="M1.6 5.2 L4 7.8 L8.6 1.8" fill="none" stroke="#3a3a3a" stroke-width="2"/></svg></span></div>
<div class="ct" style="left:610px;top:406px;width:48px;height:25px;">大西洋杯</div>
</body></html>
